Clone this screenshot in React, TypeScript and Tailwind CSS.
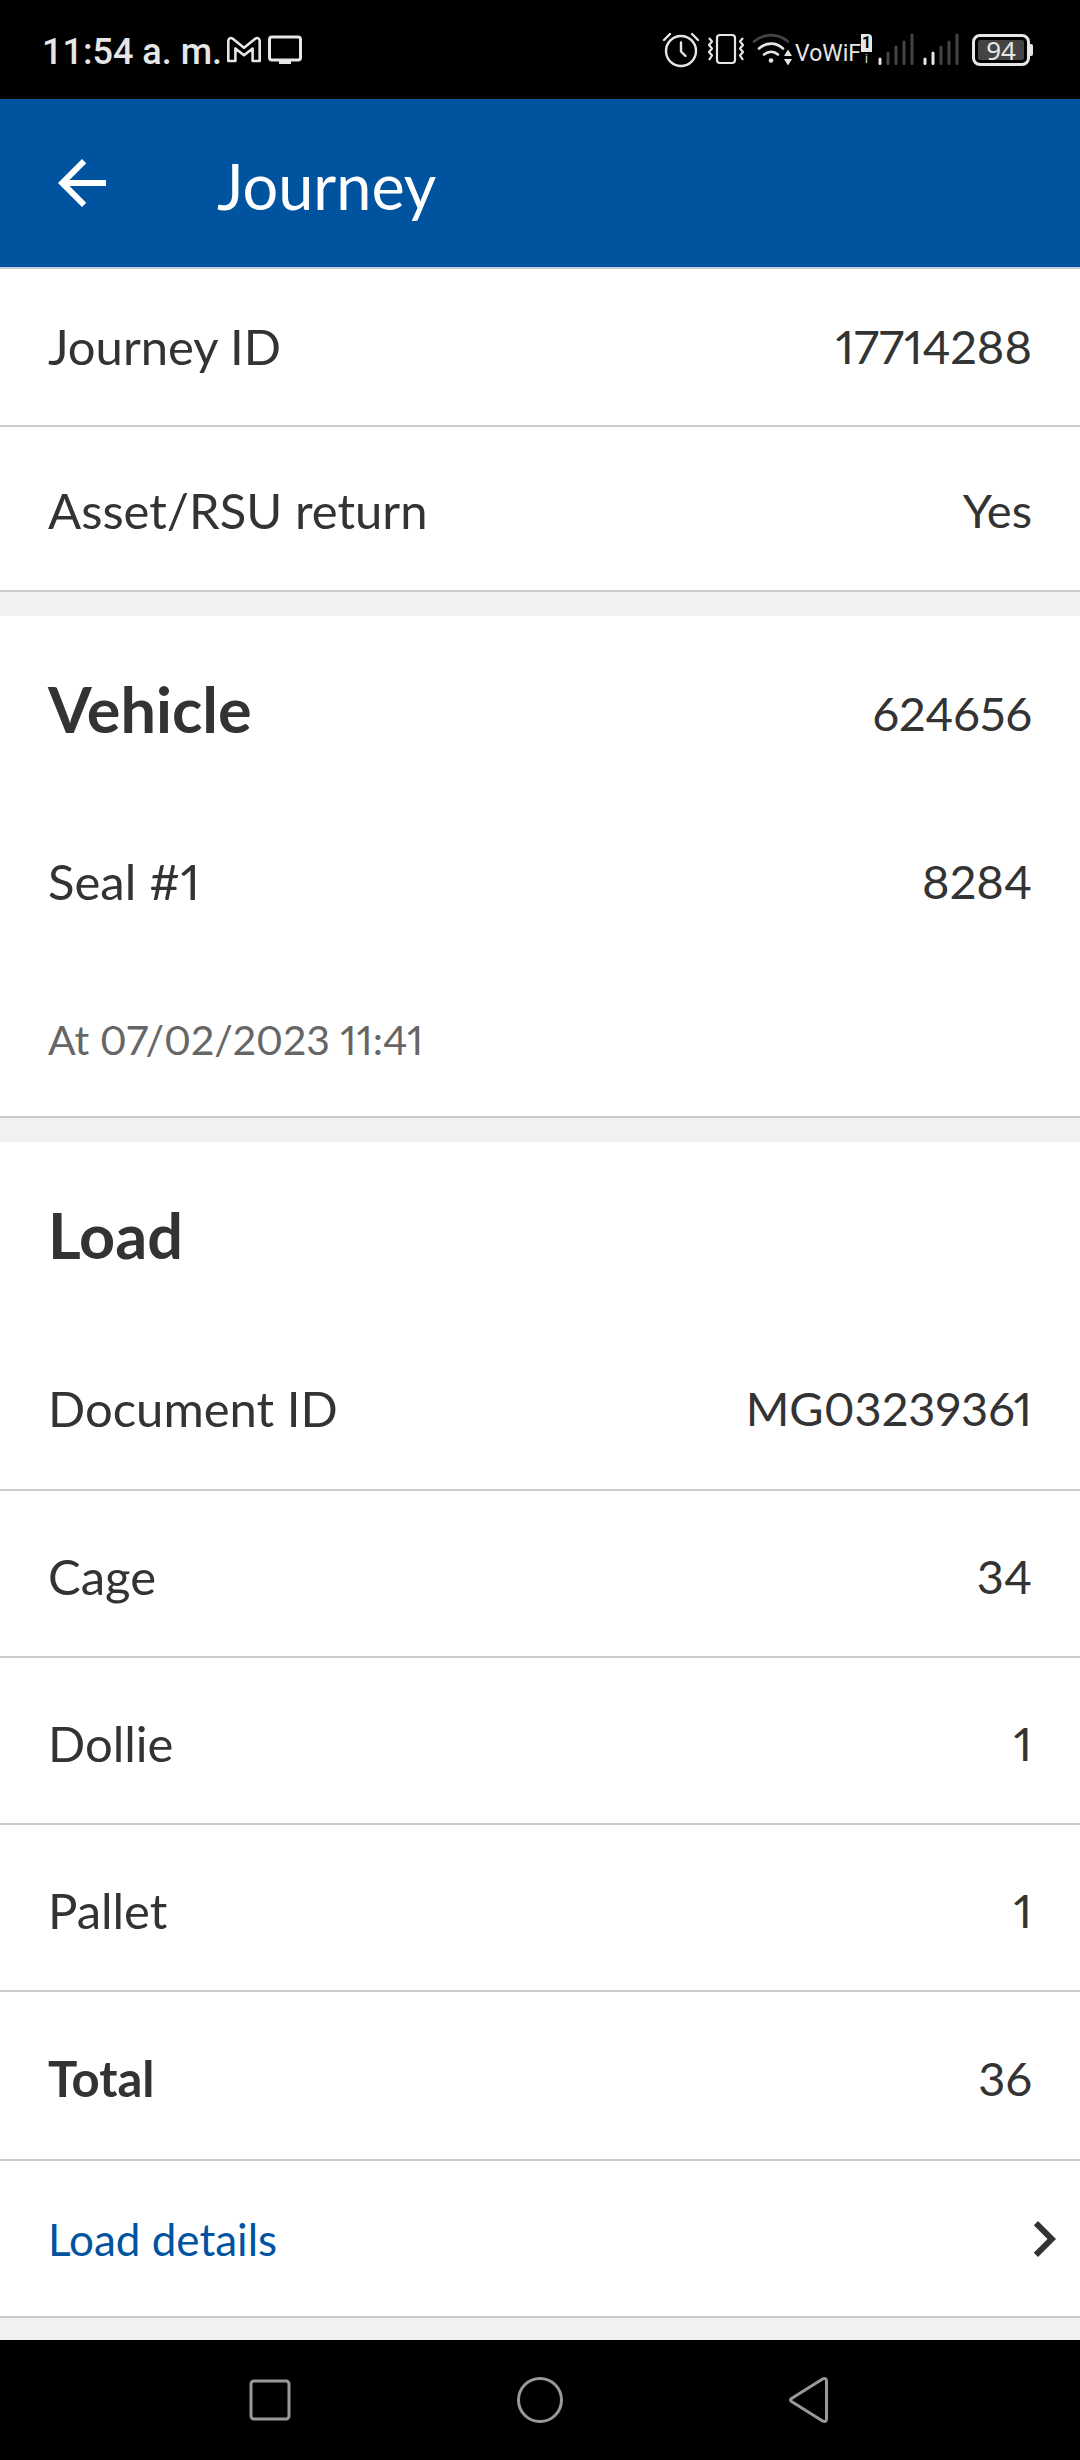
import { ReactNode } from "react";
import clsx from "clsx";
import { MdArrowBack, MdChevronRight } from "react-icons/md";

const GmailIcon = () => (
  <svg className="h-[28px] w-[36px]" viewBox="0 0 36 28" fill="none" stroke="#e6e6e6" strokeWidth="2.6" strokeLinejoin="round">
    <path d="M2.3 25V5.2C2.3 2.4 4.6 1.2 6.8 2.8L18 11.8 29.2 2.8C31.4 1.2 33.7 2.4 33.7 5.2V25H26.6V12.5L18 19.2 9.4 12.5V25Z" />
  </svg>
);

const CastIcon = () => (
  <svg className="h-[30px] w-[34px]" viewBox="0 0 34 30" fill="none">
    <rect x="1.5" y="2" width="31" height="23" rx="2.5" stroke="#e6e6e6" strokeWidth="3" />
    <rect x="11" y="25" width="12" height="4" fill="#e6e6e6" />
  </svg>
);

const AlarmIcon = () => (
  <svg className="h-[36px] w-[38px]" viewBox="0 0 38 36" fill="none" stroke="#e6e6e6" strokeWidth="2.4" strokeLinecap="round" strokeLinejoin="round">
    <circle cx="19" cy="19" r="15" />
    <path d="M19 10.500V19.500L23.500 24" />
    <path d="M2 8L8 2M36 8L30 2" />
  </svg>
);

const VibrateIcon = () => (
  <svg className="h-[36px] w-[38px]" viewBox="0 0 38 36" fill="none" stroke="#e6e6e6" strokeWidth="2.2" strokeLinejoin="round">
    <rect x="10" y="3" width="18" height="28" rx="3" />
    <path d="M2 6L5 9.500 2 13 5 16.500 2 20 5 23.500 2 28M36 6L33 9.500 36 13 33 16.500 36 20 33 23.500 36 28" />
  </svg>
);

const WifiIcon = () => (
  <svg className="h-[36px] w-[41px]" viewBox="0 0 41 36" fill="none" strokeWidth="2.6" strokeLinecap="round">
    <path d="M2 9.500C12 1 26 1 36 9.500" stroke="#444" />
    <path d="M7 16.500C14.500 10 24 10 31 16.500" stroke="#e6e6e6" />
    <path d="M12 22.500C16.500 19 22 19 26 22.500" stroke="#e6e6e6" />
    <circle cx="19" cy="28.500" r="2.300" fill="#e6e6e6" />
    <path d="M32 24L36 17.500 40 24ZM32 27H40L36 33.500Z" fill="#e6e6e6" />
  </svg>
);

const SignalIcon = ({ strength }: { strength: number }) => (
  <svg className="h-[36px] w-[37px]" viewBox="0 0 37 36" strokeWidth="3" strokeLinecap="round">
    {[27, 21, 15, 10, 3].map((top, i) => (
      <path key={top} d={`M${2 + i * 8} ${top}V31.500`} stroke={i < strength ? "#e6e6e6" : "#444"} />
    ))}
  </svg>
);

const Battery = () => (
  <div className="flex items-center">
    <div className="rounded-lg border-[3px] border-[#e6e6e6] p-[3px]">
      <div className="h-[20px] w-[46px] rounded-xs bg-[#444] text-center font-['Noto_Sans'] text-[26px] leading-[20px] text-[#e6e6e6]">
        94
      </div>
    </div>
    <div className="h-[12px] w-[3px] rounded-r-xs bg-[#e6e6e6]" />
  </div>
);

const StatusBar = () => (
  <div className="flex h-[99px] items-center justify-between bg-black pr-[47px] pl-[42px] font-[Roboto] text-[#e6e6e6]">
    <div className="flex items-center">
      <span className="pt-[4px] text-[36px] leading-[42px] font-medium">11:54 a. m.</span>
      <div className="flex items-center gap-[6px] pl-[4px]">
        <GmailIcon />
        <CastIcon />
      </div>
    </div>
    <div className="flex items-center">
      <div className="flex items-center gap-[7px]">
        <AlarmIcon />
        <VibrateIcon />
        <WifiIcon />
      </div>
      {/* the last letter sits under the SIM badge */}
      <div className="flex items-end pl-[2px]">
        <span className="text-[23px] leading-[24px]">VoWiF</span>
        <span className="flex flex-col items-center">
          <span className="h-[18px] w-[11px] rounded-tr-sm bg-[#e6e6e6] text-center text-[16px] leading-[18px] font-bold text-black">
            1
          </span>
          <span className="text-[12px] leading-[14px]">i</span>
        </span>
      </div>
      <div className="flex items-center gap-[8px] pr-[12px] pl-[6px]">
        <SignalIcon strength={1} />
        <SignalIcon strength={2} />
      </div>
      <Battery />
    </div>
  </div>
);

const Header = () => (
  <header className="flex h-[170px] items-center border-b-2 border-[#c2cfdf] bg-[#00539f] pl-[46px] text-white">
    <button type="button" aria-label="Back">
      <MdArrowBack className="size-[72px]" />
    </button>
    <h1 className="pt-[6px] pl-[99px] text-[63px] leading-[72px]">Journey</h1>
  </header>
);

const Section = ({ children }: { children: ReactNode }) => (
  <section className="border-b-2 border-[#ccc] bg-white">{children}</section>
);

const Row = ({
  label,
  value,
  bold,
  className,
}: {
  label: string;
  value: string;
  bold?: boolean;
  className?: string;
}) => (
  <div className={clsx("flex justify-between px-12 leading-[60px]", className)}>
    <dt className={clsx("text-[49px]", bold && "font-bold")}>{label}</dt>
    <dd className="text-[47px]">{value}</dd>
  </div>
);

const counts = [
  { label: "Cage", value: "34" },
  { label: "Dollie", value: "1" },
  { label: "Pallet", value: "1" },
];

const NavBar = () => (
  <nav className="grid h-[120px] grid-cols-3 place-items-center bg-black px-[12.5%]">
    <button type="button" aria-label="Recent apps">
      <svg className="size-[48px]" viewBox="0 0 48 48" fill="none" stroke="#999" strokeWidth="3">
        <rect x="5" y="5" width="38" height="38" rx="3" />
      </svg>
    </button>
    <button type="button" aria-label="Home">
      <svg className="size-[48px]" viewBox="0 0 48 48" fill="none" stroke="#999" strokeWidth="3">
        <circle cx="24" cy="24" r="21.500" />
      </svg>
    </button>
    <button type="button" aria-label="Back">
      <svg className="size-[48px]" viewBox="0 0 48 48" fill="none" stroke="#999" strokeWidth="3" strokeLinejoin="round">
        <path d="M5.500 22.500L37 2.800Q40.500 1.500 40.500 5V43Q40.500 46.500 37 45.200L5.500 25.500Q3.500 24 5.500 22.500Z" />
      </svg>
    </button>
  </nav>
);

const App = () => (
  <div className="flex min-h-screen flex-col bg-[#f1f1f1] font-[Lato,sans-serif] text-[#333]">
    <StatusBar />
    <Header />
    <main className="flex flex-1 flex-col gap-[24px] proportional-nums">
      <Section>
        <dl className="divide-y-2 divide-[#ccc]">
          <Row label="Journey ID" value="17714288" className="pt-[47px] pb-[49px]" />
          <Row label="Asset/RSU return" value="Yes" className="pt-[53px] pb-[50px]" />
        </dl>
      </Section>

      <Section>
        <div className="flex items-center justify-between px-12 pt-[57px] pb-14">
          <h2 className="text-[63px] leading-[72px] font-bold">Vehicle</h2>
          <span className="pt-[8px] text-[47px] leading-[60px]">624656</span>
        </div>
        <dl>
          <Row label="Seal #1" value="8284" className="pt-[50px] pb-[49px]" />
        </dl>
        <p className="px-12 pt-14 pb-[52px] text-[41px] leading-[48px] text-[#666]">At 07/02/2023 11:41</p>
      </Section>

      <Section>
        <h2 className="px-12 pt-[57px] pb-14 text-[63px] leading-[72px] font-bold">Load</h2>
        <dl className="divide-y-2 divide-[#ccc]">
          <Row label="Document ID" value="MG03239361" className="pt-[51px] pb-[51px]" />
          {counts.map((count) => (
            <Row key={count.label} label={count.label} value={count.value} className="pt-[55px] pb-[50px]" />
          ))}
          <Row label="Total" value="36" bold className="border-b-2 border-[#ccc] pt-14 pb-[51px]" />
        </dl>
        <a href="#" className="flex h-[155px] items-center justify-between pl-12">
          <span className="text-[44px] leading-[60px] text-[#00539f]">Load details</span>
          <MdChevronRight className="size-[72px]" />
        </a>
      </Section>
    </main>
    <NavBar />
  </div>
);

export default App;
